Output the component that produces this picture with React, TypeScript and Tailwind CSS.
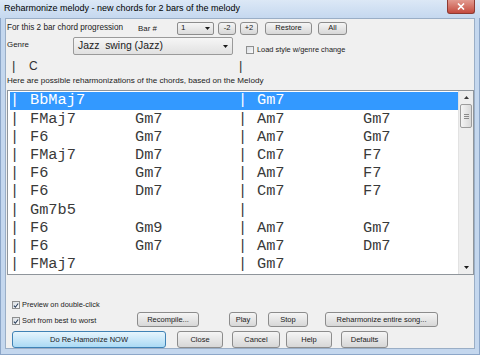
import React from "react";

const rows: string[][] = [
  ["BbMaj7", "", "Gm7", ""],
  ["FMaj7", "Gm7", "Am7", "Gm7"],
  ["F6", "Gm7", "Am7", "Gm7"],
  ["FMaj7", "Dm7", "Cm7", "F7"],
  ["F6", "Gm7", "Am7", "F7"],
  ["F6", "Dm7", "Cm7", "F7"],
  ["Gm7b5", "", "", ""],
  ["F6", "Gm9", "Am7", "Gm7"],
  ["F6", "Gm7", "Am7", "Dm7"],
  ["FMaj7", "", "Gm7", ""],
];

function WinButton({ label, className = "", primary = false }: { label: string; className?: string; primary?: boolean }) {
  return (
    <div
      className={`flex shrink-0 items-center justify-center rounded-[3px] border text-[7.5px] leading-none text-[#1a1a1a] ${
        primary
          ? "border-[#3f82b5] bg-linear-to-b from-[#e6f5fd] to-[#abdaf4]"
          : "border-[#8c8c8c] bg-linear-to-b from-[#f5f5f5] to-[#d7d7d7]"
      } ${className}`}
    >
      {label}
    </div>
  );
}

function Check({ checked = false }: { checked?: boolean }) {
  return (
    <div className="flex h-[8px] w-[8px] shrink-0 items-center justify-center border border-[#8e8f8f] bg-linear-to-br from-[#d9dde2] to-[#fbfbfb]">
      {checked ? (
        <svg width="7" height="7" viewBox="0 0 7 7">
          <path d="M1 3.6 L2.8 5.5 L6 1.2" fill="none" stroke="#2b3f5c" strokeWidth="1.3" />
        </svg>
      ) : null}
    </div>
  );
}

function DownArrow({ className = "" }: { className?: string }) {
  return (
    <svg width="5" height="3" viewBox="0 0 5 3" className={className}>
      <path d="M0 0 H5 L2.5 3 Z" fill="#1a1a1a" />
    </svg>
  );
}

export default function App() {
  return (
    <div className="h-[355px] w-[480px] overflow-hidden bg-[#c4d7ee] font-['Liberation_Sans',Arial,sans-serif] text-[#1a1a1a] shadow-[inset_0_0_0_1px_#8ca6c8]">
      {/* title bar */}
      <div className="flex h-[18px] items-start bg-linear-to-b from-[#dce8f6] to-[#c5d8ef]">
        <span className="pl-[4px] pt-[3px] text-[9px] leading-[10px] text-black">
          Reharmonize melody - new chords for 2 bars of the melody
        </span>
        <div className="ml-auto mr-[5px] flex h-[14px] w-[28px] items-center justify-center rounded-b-[3px] border border-t-0 border-[#8d3a32] bg-linear-to-b from-[#e29a90] to-[#c44a3f]">
          <svg width="8" height="7" viewBox="0 0 8 7">
            <path d="M1 0.5 L7 6.5 M7 0.5 L1 6.5" stroke="#ffffff" strokeWidth="1.6" />
          </svg>
        </div>
      </div>

      {/* dialog body */}
      <div className="mx-[5px] flex h-[331px] flex-col border border-[#9aaec6] bg-[#f0f0f0] text-[7.4px]">
        <div className="mt-[2px] flex h-[14px] items-center">
          <span className="ml-[1px] w-[131px] shrink-0 text-[8.2px]">For this 2 bar chord progression</span>
          <span className="w-[39px] shrink-0 self-start pt-[2px] text-[7.9px]">Bar #</span>
          <div className="flex h-[13px] w-[37px] shrink-0 items-center justify-between rounded-[2px] border border-[#8c8c8c] bg-linear-to-b from-[#f5f5f5] to-[#dcdcdc] px-[3px] text-[8px]">
            <span>1</span>
            <DownArrow />
          </div>
          <WinButton label="-2" className="ml-[4px] h-[13px] w-[18px]" />
          <WinButton label="+2" className="ml-[4px] h-[13px] w-[18px]" />
          <WinButton label="Restore" className="ml-[7px] h-[13px] w-[47px]" />
          <WinButton label="All" className="ml-[6px] h-[13px] w-[29px]" />
        </div>

        <div className="mt-[2px] flex h-[18px] items-start">
          <span className="ml-[1px] mt-[3px] w-[66px] shrink-0 text-[7.9px] leading-[10px]">Genre</span>
          <div className="flex h-[18px] w-[160px] shrink-0 items-center justify-between rounded-[2px] border border-[#9a9a9a] bg-linear-to-b from-[#f6f6f6] to-[#e1e1e1] pl-[4px] pr-[4px]">
            <span className="whitespace-pre text-[10.4px] leading-none text-[#222]">Jazz  swing (Jazz)</span>
            <DownArrow />
          </div>
          <div className="ml-[13px] mt-[9px]">
            <Check />
          </div>
          <span className="ml-[3px] mt-[8px] leading-[10px]">Load style w/genre change</span>
        </div>

        <div className="mt-[3px] flex h-[15px] items-center text-[#333]">
          <span className="ml-[6px] w-[17px] shrink-0 text-[13px] leading-none">|</span>
          <span className="w-[210px] shrink-0 text-[12px] leading-none">C</span>
          <span className="text-[13px] leading-none">|</span>
        </div>

        <div className="flex h-[16px] items-center">
          <span className="ml-[1px] text-[8.1px]">Here are possible reharmonizations of the chords, based on the Melody</span>
        </div>

        {/* chord list */}
        <div className="ml-[1px] mt-[1px] flex h-[185px] w-[467px] overflow-hidden border border-[#8f959b] bg-white">
          <div className="flex-1 overflow-hidden pl-[2px] pt-[1px] font-['Liberation_Mono','Courier_New',monospace] text-[15.3px] leading-none">
            {rows.map((r, i) => (
              <div
                key={i}
                className={`flex h-[18.2px] items-center whitespace-pre ${i === 0 ? "bg-[#3399ff] text-white" : "text-[#3a3a3a]"}`}
              >
                <span className="w-[20px] shrink-0">|</span>
                <span className="w-[105px] shrink-0">{r[0]}</span>
                <span className="w-[103px] shrink-0">{r[1]}</span>
                <span className="w-[19px] shrink-0">|</span>
                <span className="w-[106px] shrink-0">{r[2]}</span>
                <span className="shrink-0">{r[3]}</span>
              </div>
            ))}
          </div>
          <div className="flex w-[15px] shrink-0 flex-col border-l border-[#e2e2e2] bg-[#eeeeee]">
            <div className="flex h-[13px] items-center justify-center">
              <svg width="5" height="3" viewBox="0 0 5 3">
                <path d="M0 3 H5 L2.5 0 Z" fill="#3a3a3a" />
              </svg>
            </div>
            <div className="mx-[1px] flex h-[24px] flex-col items-center justify-center gap-[1px] rounded-[2px] border border-[#9c9c9c] bg-linear-to-r from-[#f4f4f4] to-[#d9d9d9]">
              <div className="h-px w-[5px] bg-[#8a8a8a]" />
              <div className="h-px w-[5px] bg-[#8a8a8a]" />
              <div className="h-px w-[5px] bg-[#8a8a8a]" />
            </div>
            <div className="flex-1" />
            <div className="flex h-[13px] items-center justify-center">
              <DownArrow />
            </div>
          </div>
        </div>

        {/* options and buttons */}
        <div className="mt-[25px] flex h-[10px] items-center">
          <div className="ml-[6px]">
            <Check checked />
          </div>
          <span className="ml-[2px]">Preview on double-click</span>
        </div>

        <div className="mt-[2px] flex h-[15px] items-center">
          <div className="ml-[6px] flex h-[15px] w-[125px] shrink-0 items-center pt-[3px]">
            <Check checked />
            <span className="ml-[2px]">Sort from best to worst</span>
          </div>
          <WinButton label="Recompile..." className="h-[15px] w-[62px]" />
          <WinButton label="Play" className="ml-[30px] h-[15px] w-[28px]" />
          <WinButton label="Stop" className="ml-[11px] h-[15px] w-[40px]" />
          <WinButton label="Reharmonize entire song..." className="ml-[17px] h-[15px] w-[113px]" />
        </div>

        <div className="mt-[4px] flex h-[17px] items-center">
          <WinButton label="Do Re-Hamonize NOW" primary className="ml-[6px] h-[17px] w-[154px]" />
          <WinButton label="Close" className="ml-[11px] h-[17px] w-[46px]" />
          <WinButton label="Cancel" className="ml-[9px] h-[17px] w-[48px]" />
          <WinButton label="Help" className="ml-[6px] h-[17px] w-[46px]" />
          <WinButton label="Defaults" className="ml-[9px] h-[17px] w-[47px]" />
        </div>
      </div>
    </div>
  );
}
